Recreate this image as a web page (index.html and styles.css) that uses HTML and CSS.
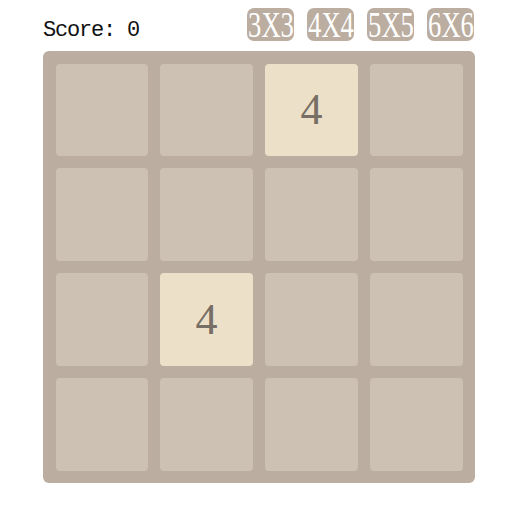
FILE: index.html
```html
<!DOCTYPE html>
<html>
<head>
<meta charset="utf-8">
<link rel="stylesheet" href="styles.css">
</head>
<body>
<div class="page">
  <div class="header">
    <div class="score">Score: 0</div>
    <div class="sizes">
      <div class="size-btn"><span>3X3</span></div>
      <div class="size-btn"><span>4X4</span></div>
      <div class="size-btn"><span>5X5</span></div>
      <div class="size-btn"><span>6X6</span></div>
    </div>
  </div>
  <div class="board">
    <div class="cell"></div>
    <div class="cell"></div>
    <div class="cell tile-4">4</div>
    <div class="cell"></div>
    <div class="cell"></div>
    <div class="cell"></div>
    <div class="cell"></div>
    <div class="cell"></div>
    <div class="cell"></div>
    <div class="cell tile-4">4</div>
    <div class="cell"></div>
    <div class="cell"></div>
    <div class="cell"></div>
    <div class="cell"></div>
    <div class="cell"></div>
    <div class="cell"></div>
  </div>
</div>
</body>
</html>
```
FILE: styles.css
```css
html, body {
  margin: 0;
  padding: 0;
  background: #ffffff;
}

.page {
  padding: 8px 0 0 43px;
  width: 432px;
}

.header {
  display: flex;
  justify-content: space-between;
  align-items: flex-start;
  height: 33px;
  margin-bottom: 10px;
}

.score {
  margin-top: 12px;
  font-family: "Liberation Mono", monospace;
  font-size: 22px;
  line-height: 22px;
  letter-spacing: -1.2px;
  color: #111111;
}

.sizes {
  display: flex;
  gap: 13px;
  margin-right: 1px;
}

.size-btn {
  width: 47px;
  height: 33px;
  background: #bbada0;
  border-radius: 7px;
  color: #ffffff;
  font-family: "Liberation Serif", serif;
  font-size: 36px;
  line-height: 35px;
  text-align: center;
  overflow: visible;
  white-space: nowrap;
}

.size-btn span {
  display: inline-block;
  transform: scaleX(0.74);
  transform-origin: center;
  margin: 0 -10px;
}

.board {
  box-sizing: border-box;
  width: 432px;
  height: 432px;
  padding: 12.5px;
  background: #bbada0;
  border-radius: 6px;
  display: grid;
  grid-template-columns: repeat(4, 1fr);
  grid-template-rows: repeat(4, 1fr);
  gap: 12.5px;
}

.cell {
  background: #cdc1b4;
  border-radius: 4px;
  display: flex;
  align-items: center;
  justify-content: center;
  font-family: "Liberation Serif", serif;
  font-size: 44px;
  color: #776e65;
}

.tile-4 {
  background: #ede0c8;
}
```
